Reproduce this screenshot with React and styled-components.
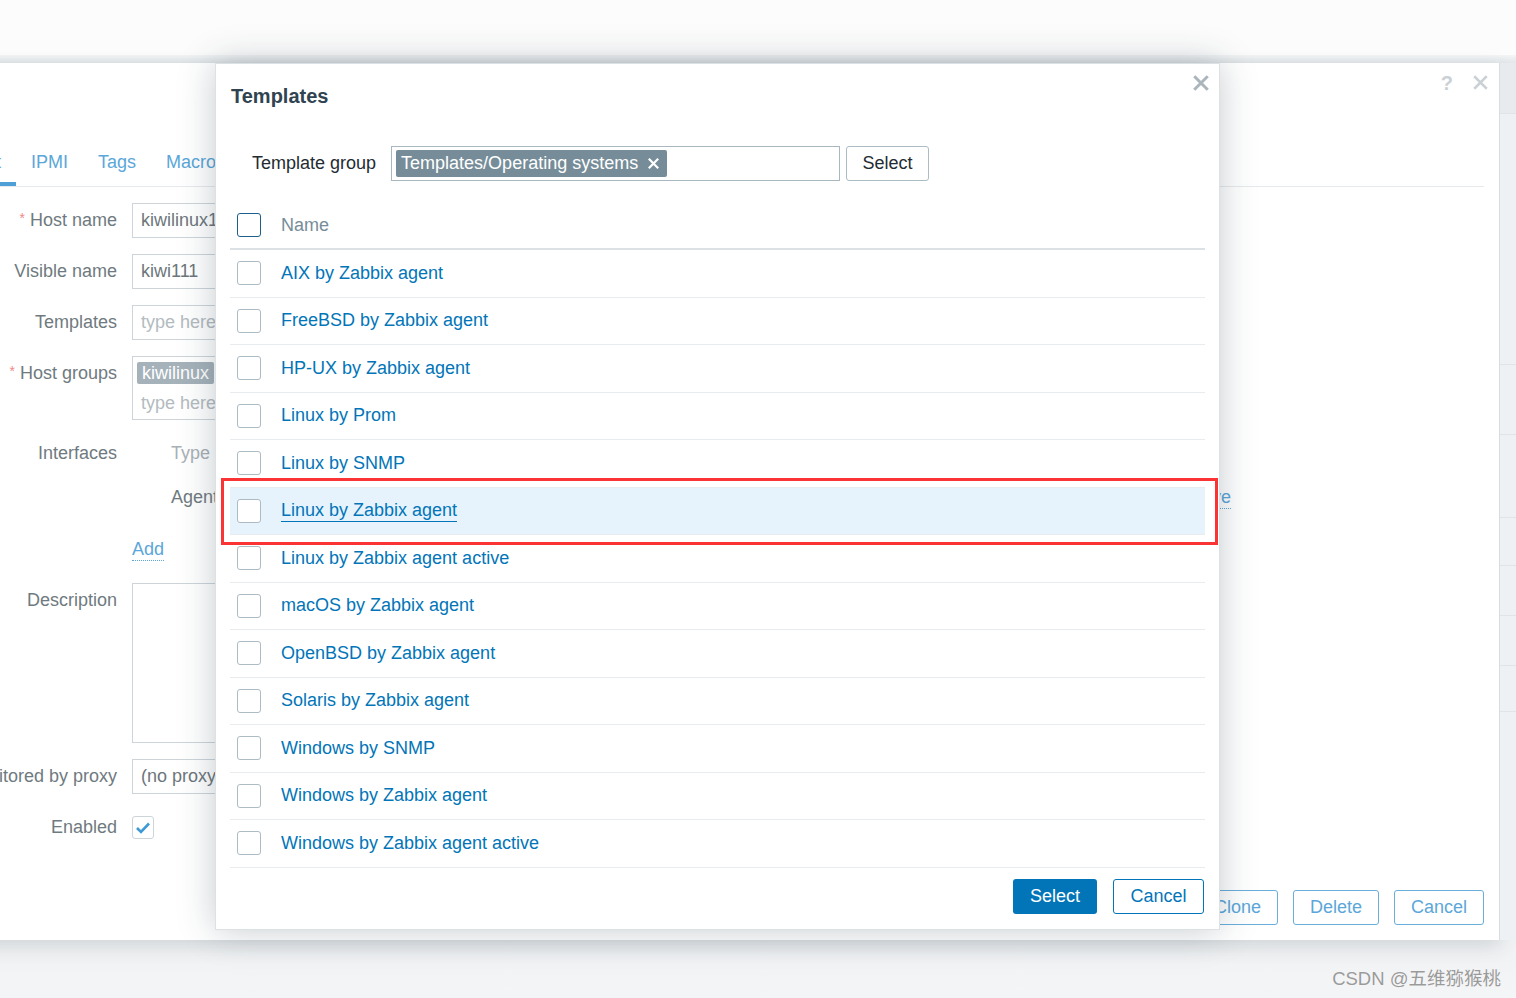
import React from 'react'
import styled, { createGlobalStyle } from 'styled-components'

const GlobalStyle = createGlobalStyle`
	html, body {
		margin: 0;
		padding: 0;
		height: 100%;
		overflow: hidden;
	}
	body {
		background: #f1f3f4;
		font-family: "Liberation Sans", Arial, sans-serif;
		font-size: 18px;
	}
`

const templates = [
	'AIX by Zabbix agent',
	'FreeBSD by Zabbix agent',
	'HP-UX by Zabbix agent',
	'Linux by Prom',
	'Linux by SNMP',
	'Linux by Zabbix agent',
	'Linux by Zabbix agent active',
	'macOS by Zabbix agent',
	'OpenBSD by Zabbix agent',
	'Solaris by Zabbix agent',
	'Windows by SNMP',
	'Windows by Zabbix agent',
	'Windows by Zabbix agent active',
]

const hostTabs = ['Host', 'IPMI', 'Tags', 'Macros']

function Cross({ size = 14, color = '#aab5bc', width = 2.6 }) {
	return (
		<svg width={size} height={size} viewBox="0 0 14 14">
			<path d="M2 2 L12 12 M12 2 L2 12" stroke={color} strokeWidth={width} strokeLinecap="square" />
		</svg>
	)
}

function App() {
	return (
		<S.Page>
			<GlobalStyle />
			<S.TopStrip />
			<S.Shade />
			<S.Stage>
				<S.HostDialog>
					<S.HostHeader>
						<S.HelpMark>?</S.HelpMark>
						<Cross size={15} color="#c9d1d6" width={2.4} />
					</S.HostHeader>
					<S.Tabs>
						{hostTabs.map((t, i) => (
							<S.Tab key={t} $active={i === 0}>
								{t}
							</S.Tab>
						))}
					</S.Tabs>
					<S.Form>
						<S.Label>
							<S.Req>*</S.Req>Host name
						</S.Label>
						<S.Field>kiwilinux111</S.Field>

						<S.Label>Visible name</S.Label>
						<S.Field>kiwi111</S.Field>

						<S.Label>Templates</S.Label>
						<S.Field $placeholder>type here to search</S.Field>

						<S.Label>
							<S.Req>*</S.Req>Host groups
						</S.Label>
						<S.GroupBox>
							<S.GroupChip>kiwilinux</S.GroupChip>
							<S.GroupHint>type here to search</S.GroupHint>
						</S.GroupBox>

						<S.Label>Interfaces</S.Label>
						<S.Interfaces>
							<S.IfHead>Type</S.IfHead>
							<S.IfRow>
								<span>Agent</span>
								<S.DotLink>Remove</S.DotLink>
							</S.IfRow>
							<S.AddLine>
								<S.DotLink>Add</S.DotLink>
							</S.AddLine>
						</S.Interfaces>

						<S.Label>Description</S.Label>
						<S.TextArea />

						<S.Label>Monitored by proxy</S.Label>
						<S.Field>(no proxy)</S.Field>

						<S.Label>Enabled</S.Label>
						<S.CheckLine>
							<S.SmallCheck>
								<svg width="16" height="14" viewBox="0 0 16 14">
									<path d="M2 7 L6 11 L14 2.5" fill="none" stroke="#3f9ad4" strokeWidth="2.6" />
								</svg>
							</S.SmallCheck>
						</S.CheckLine>
					</S.Form>
					<S.HostFooter>
						<S.GhostButton>Clone</S.GhostButton>
						<S.GhostButton>Delete</S.GhostButton>
						<S.GhostButton>Cancel</S.GhostButton>
					</S.HostFooter>
				</S.HostDialog>
				<S.BackStrip>
					<S.StripRow $h={50} $dark />
					<S.StripRow $h={250} />
					<S.StripRow $h={69} />
					<S.StripRow $h={82} />
					<S.StripRow $h={47} />
					<S.StripRow $h={49} />
					<S.StripRow $h={49} />
					<S.StripRow $h={45} />
				</S.BackStrip>

				<S.Modal>
					<S.ModalHeader>
						<S.Title>Templates</S.Title>
						<S.Close>
							<Cross size={16} />
						</S.Close>
					</S.ModalHeader>
					<S.Filter>
						<S.FilterLabel>Template group</S.FilterLabel>
						<S.MultiSelect>
							<S.Chip>
								Templates/Operating systems
								<Cross size={11} color="#ffffff" width={2.8} />
							</S.Chip>
						</S.MultiSelect>
						<S.PlainButton>Select</S.PlainButton>
					</S.Filter>
					<S.List>
						<S.HeadRow>
							<S.Check $focus />
							<S.HeadText>Name</S.HeadText>
						</S.HeadRow>
						{templates.map((name) => {
							const hovered = name === 'Linux by Zabbix agent'
							return (
								<S.Row key={name} $hover={hovered}>
									<S.Check />
									<S.Link $hover={hovered}>{name}</S.Link>
								</S.Row>
							)
						})}
					</S.List>
					<S.ModalFooter>
						<S.PrimaryButton>Select</S.PrimaryButton>
						<S.OutlineButton>Cancel</S.OutlineButton>
					</S.ModalFooter>
					<S.Marker />
				</S.Modal>
			</S.Stage>
			<S.Watermark>CSDN @五维猕猴桃</S.Watermark>
		</S.Page>
	)
}

export default App

const Page = styled.div`
	position: relative;
	height: 998px;
	display: flex;
	flex-direction: column;
	background: linear-gradient(#eceef0 880px, #f4f5f6 998px);
`

const TopStrip = styled.div`
	height: 55px;
	background: #fcfcfc;
`

const Shade = styled.div`
	height: 8px;
	background: linear-gradient(#f3f5f6, #e3e7ea);
`

const Stage = styled.div`
	position: relative;
	height: 877px;
	display: flex;
`

const HostDialog = styled.div`
	flex: none;
	width: 1566px;
	margin-left: -66px;
	box-sizing: border-box;
	padding: 0 15px 15px;
	display: flex;
	flex-direction: column;
	background: #fff;
	border-right: 1px solid #d8dde1;
	box-shadow: 0 6px 18px rgba(40, 60, 75, 0.16);
`

const HostHeader = styled.div`
	height: 77px;
	display: flex;
	justify-content: flex-end;
	align-items: flex-start;
	gap: 20px;
	padding: 12px 0 0 0;
	margin-right: -4px;
	box-sizing: border-box;
`

const HelpMark = styled.span`
	color: #c9d1d6;
	font-size: 20px;
	line-height: 16px;
	font-weight: bold;
`

const Tabs = styled.div`
	display: flex;
	border-bottom: 1px solid #e6eaed;
`

const Tab = styled.div`
	height: 46px;
	box-sizing: border-box;
	padding: 3px 15px 0;
	line-height: 38px;
	color: #5ba7d9;
	white-space: nowrap;
	border-bottom: 4px solid ${(p) => (p.$active ? '#4d9fd6' : 'transparent')};
`

const Form = styled.div`
	display: grid;
	grid-template-columns: 168px 1fr;
	column-gap: 15px;
	row-gap: 16px;
	padding-top: 16px;
	align-items: start;
`

const Label = styled.div`
	text-align: right;
	line-height: 35px;
	color: #6f7a80;
	white-space: nowrap;
`

const Req = styled.span`
	color: #f08a8a;
	font-size: 14px;
	vertical-align: top;
	margin-right: 5px;
	position: relative;
	top: -2px;
`

const Field = styled.div`
	width: 460px;
	height: 35px;
	box-sizing: border-box;
	border: 1px solid #cdd5da;
	padding: 0 8px;
	line-height: 33px;
	color: ${(p) => (p.$placeholder ? '#b3bbc0' : '#6d767b')};
	white-space: nowrap;
`

const GroupBox = styled.div`
	width: 460px;
	height: 64px;
	box-sizing: border-box;
	border: 1px solid #cdd5da;
	padding: 5px 4px;
	display: flex;
	flex-direction: column;
	align-items: flex-start;
`

const GroupChip = styled.span`
	height: 22px;
	line-height: 22px;
	padding: 0 5px;
	border-radius: 2px;
	background: #a5b2ba;
	color: #fff;
`

const GroupHint = styled.span`
	margin-top: 8px;
	padding-left: 4px;
	line-height: 22px;
	color: #b3bbc0;
`

const Interfaces = styled.div`
	width: 1099px;
	display: flex;
	flex-direction: column;
`

const IfHead = styled.div`
	line-height: 35px;
	padding-left: 39px;
	color: #a9b1b6;
`

const IfRow = styled.div`
	margin-top: 9px;
	line-height: 35px;
	padding-left: 39px;
	display: flex;
	justify-content: space-between;
	color: #6f7a80;
`

const AddLine = styled.div`
	margin-top: 17px;
	height: 35px;
	display: flex;
	align-items: center;
`

const DotLink = styled.span`
	color: #5ba7d9;
	line-height: 22px;
	border-bottom: 1px dotted #5ba7d9;
	align-self: center;
`

const TextArea = styled.div`
	width: 460px;
	height: 160px;
	box-sizing: border-box;
	border: 1px solid #cdd5da;
`

const CheckLine = styled.div`
	height: 35px;
	display: flex;
	align-items: center;
`

const SmallCheck = styled.div`
	width: 22px;
	height: 23px;
	box-sizing: border-box;
	border: 1px solid #cdd5da;
	border-radius: 3px;
	display: flex;
	align-items: center;
	justify-content: center;
`

const HostFooter = styled.div`
	margin-top: auto;
	display: flex;
	justify-content: flex-end;
	gap: 15px;
`

const GhostButton = styled.div`
	height: 35px;
	box-sizing: border-box;
	padding: 0 16px;
	line-height: 33px;
	border: 1px solid #6aaedb;
	border-radius: 3px;
	color: #5ba7d9;
	background: #fff;
`

const BackStrip = styled.div`
	flex: 1;
	display: flex;
	flex-direction: column;
	background: #eef1f3;
`

const StripRow = styled.div`
	height: ${(p) => p.$h}px;
	flex: none;
	border-bottom: 1px solid #e0e4e7;
	background: ${(p) => (p.$dark ? '#e8ebee' : 'transparent')};
`

const Modal = styled.div`
	position: absolute;
	left: 215px;
	top: 0;
	width: 1005px;
	height: 867px;
	box-sizing: border-box;
	padding: 0 14px 15px;
	display: flex;
	flex-direction: column;
	background: #fff;
	border: 1px solid #dce1e4;
	box-shadow: 0 0 34px rgba(30, 50, 65, 0.26);
`

const ModalHeader = styled.div`
	height: 66px;
	box-sizing: border-box;
	padding: 20px 0 0 1px;
`

const Title = styled.h4`
	margin: 0;
	font-size: 20px;
	line-height: 24px;
	font-weight: bold;
	color: #2f4350;
`

const Close = styled.div`
	position: absolute;
	top: 11px;
	right: 10px;
	width: 16px;
	height: 16px;
	display: flex;
`

const Filter = styled.div`
	margin-top: 16px;
	padding-left: 22px;
	display: flex;
	align-items: center;
`

const FilterLabel = styled.span`
	color: #1f2c33;
	margin-right: 15px;
	white-space: nowrap;
`

const MultiSelect = styled.div`
	width: 449px;
	height: 35px;
	box-sizing: border-box;
	border: 1px solid #a9b7bf;
	padding: 3px 4px;
	display: flex;
	align-items: flex-start;
`

const Chip = styled.span`
	height: 27px;
	line-height: 27px;
	padding: 0 8px 0 5px;
	border-radius: 2px;
	background: #768d99;
	color: #fff;
	white-space: nowrap;
	display: flex;
	align-items: center;
	gap: 10px;
`

const PlainButton = styled.div`
	margin-left: 6px;
	width: 83px;
	height: 35px;
	box-sizing: border-box;
	border: 1px solid #acbbc4;
	border-radius: 3px;
	line-height: 33px;
	text-align: center;
	color: #1f2c33;
`

const List = styled.div`
	margin-top: 19px;
	display: flex;
	flex-direction: column;
`

const HeadRow = styled.div`
	height: 50px;
	box-sizing: border-box;
	border-bottom: 2px solid #dbe1e5;
	padding: 2px 0 0 7px;
	display: flex;
	align-items: center;
	gap: 20px;
`

const HeadText = styled.span`
	color: #768d99;
`

const Row = styled.div`
	height: 47.5px;
	box-sizing: border-box;
	border-bottom: 1px solid #e8ecef;
	padding-left: 7px;
	display: flex;
	align-items: center;
	gap: 20px;
	background: ${(p) => (p.$hover ? '#e6f3fd' : '#fff')};
`

const Check = styled.span`
	flex: none;
	width: 24px;
	height: 24px;
	box-sizing: border-box;
	border: 1px solid ${(p) => (p.$focus ? '#1c5e8c' : '#acbbc4')};
	border-radius: 3px;
	background: #fff;
`

const Link = styled.span`
	color: #0275b8;
	line-height: 22px;
	border-bottom: 1px solid ${(p) => (p.$hover ? '#0275b8' : 'transparent')};
`

const ModalFooter = styled.div`
	margin-top: auto;
	display: flex;
	justify-content: flex-end;
	gap: 16px;
	padding-right: 1px;
`

const PrimaryButton = styled.div`
	width: 84px;
	height: 35px;
	box-sizing: border-box;
	border-radius: 3px;
	background: #0275b8;
	color: #fff;
	line-height: 35px;
	text-align: center;
`

const OutlineButton = styled.div`
	width: 91px;
	height: 35px;
	box-sizing: border-box;
	border: 1px solid #0275b8;
	border-radius: 3px;
	color: #0275b8;
	line-height: 33px;
	text-align: center;
`

const Marker = styled.div`
	position: absolute;
	left: 5px;
	top: 414px;
	width: 997px;
	height: 67px;
	box-sizing: border-box;
	border: 3px solid #fa3434;
	pointer-events: none;
`

const Watermark = styled.div`
	position: absolute;
	right: 15px;
	bottom: 8px;
	font-family: "Liberation Sans", "Noto Sans CJK SC", sans-serif;
	font-size: 18.5px;
	color: #9a9a9a;
	text-shadow: 0 0 1px #fff;
	white-space: nowrap;
`

const S = {
	Page,
	TopStrip,
	Shade,
	Stage,
	HostDialog,
	HostHeader,
	HelpMark,
	Tabs,
	Tab,
	Form,
	Label,
	Req,
	Field,
	GroupBox,
	GroupChip,
	GroupHint,
	Interfaces,
	IfHead,
	IfRow,
	AddLine,
	DotLink,
	TextArea,
	CheckLine,
	SmallCheck,
	HostFooter,
	GhostButton,
	BackStrip,
	StripRow,
	Modal,
	ModalHeader,
	Title,
	Close,
	Filter,
	FilterLabel,
	MultiSelect,
	Chip,
	PlainButton,
	List,
	HeadRow,
	HeadText,
	Row,
	Check,
	Link,
	ModalFooter,
	PrimaryButton,
	OutlineButton,
	Marker,
	Watermark,
}
